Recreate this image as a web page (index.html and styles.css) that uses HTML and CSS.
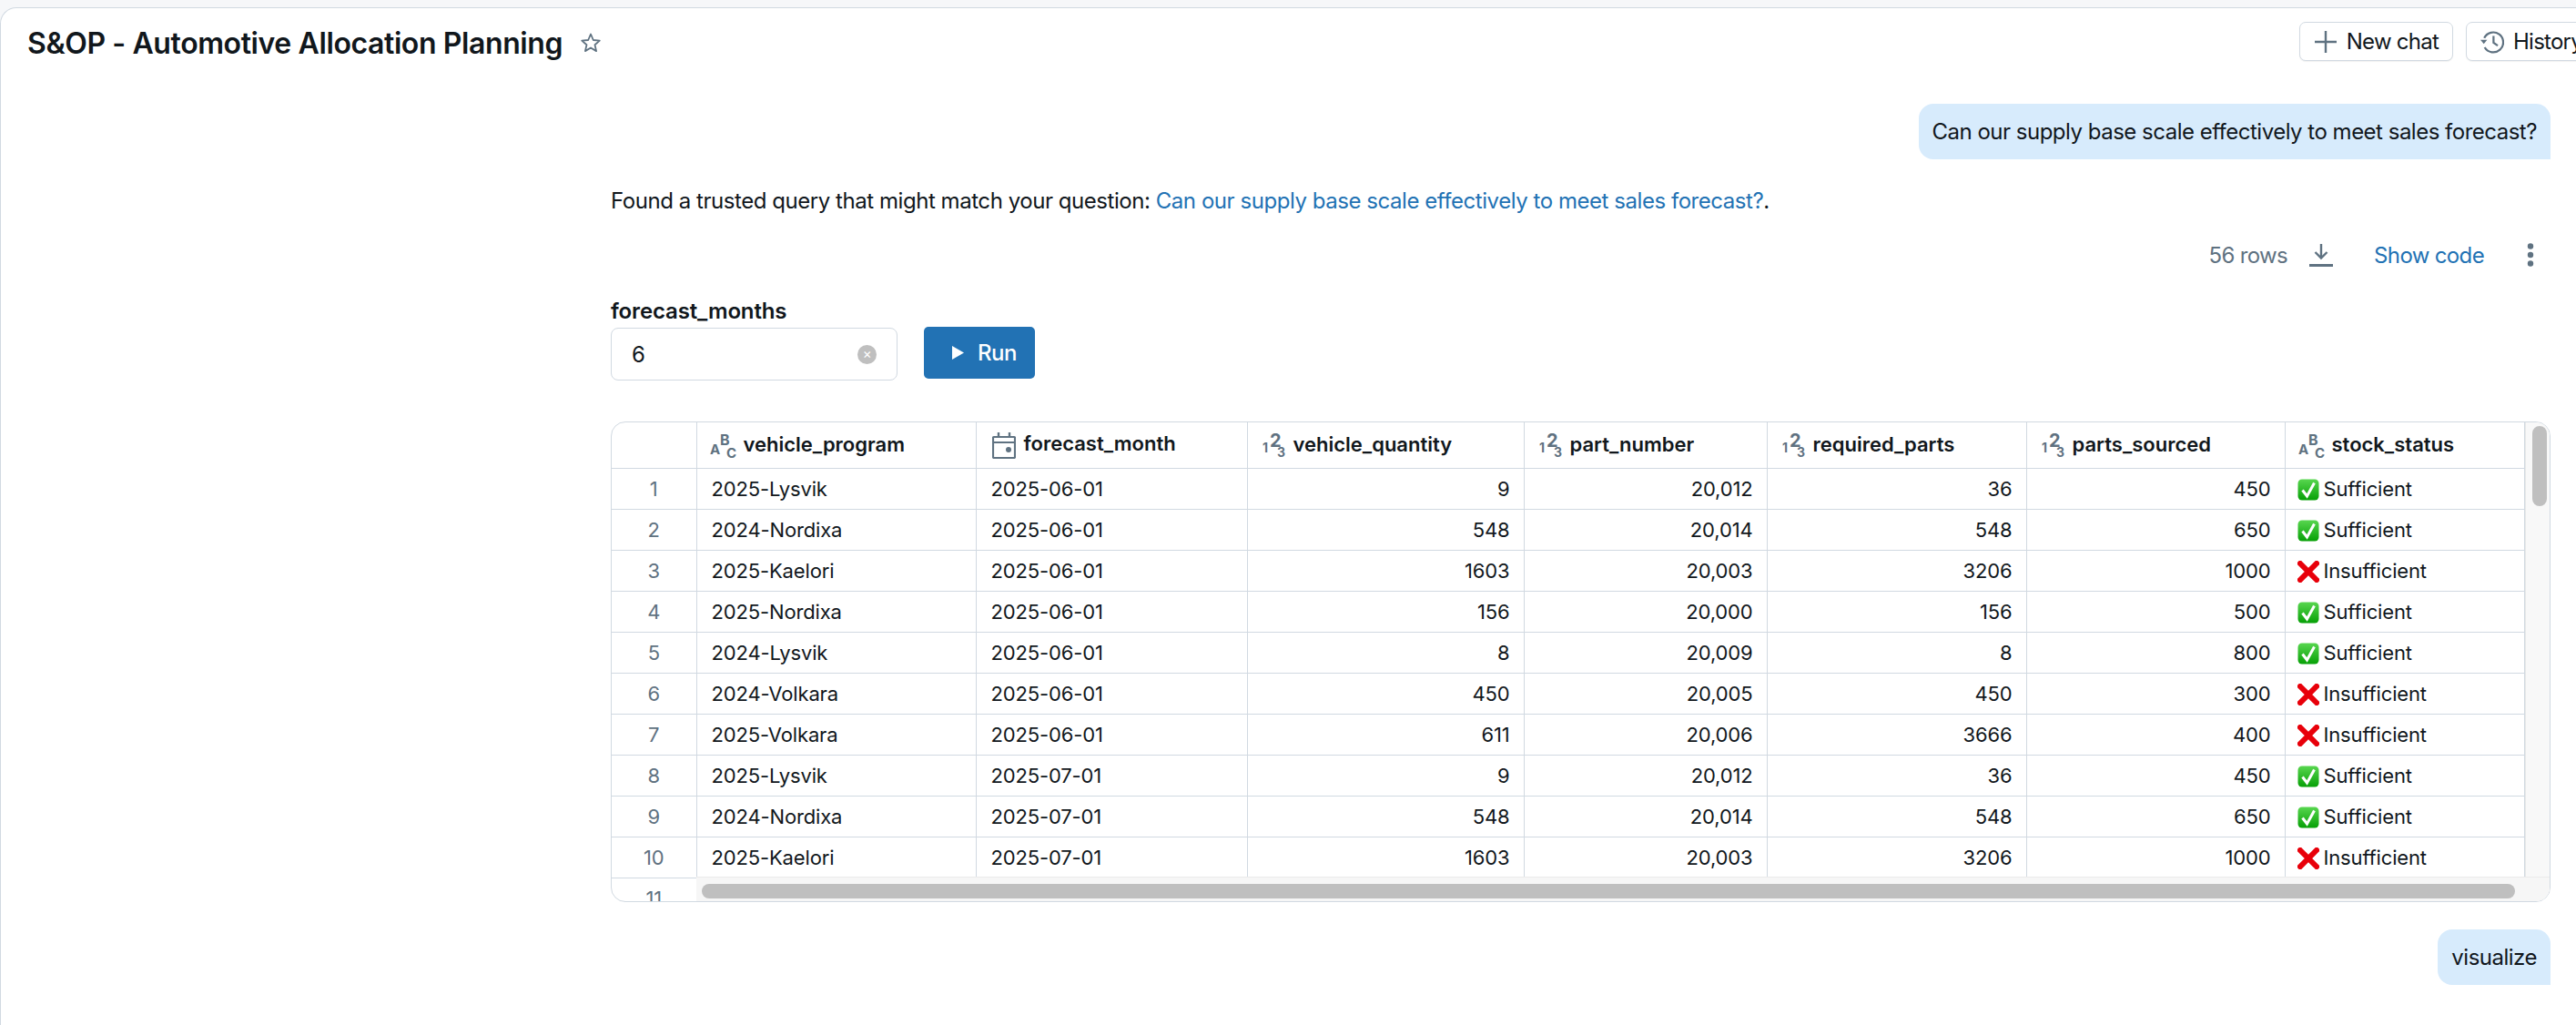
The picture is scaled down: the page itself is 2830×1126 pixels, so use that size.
FILE: index.html
```html
<!DOCTYPE html>
<html lang="en">
<head>
    <meta charset="UTF-8">
    <title>S&amp;OP - Automotive Allocation Planning</title>
    <link rel="stylesheet" href="styles.css">
</head>
<body>
    <svg class="defs" width="0" height="0">
        <defs>
            <linearGradient id="okFill" x1="0" y1="0" x2="0" y2="1">
                <stop offset="0" stop-color="#58d64f"/>
                <stop offset="1" stop-color="#06a006"/>
            </linearGradient>
        </defs>
        <symbol id="ok" viewBox="0 0 24 24">
            <rect x="0.5" y="0.5" width="23" height="23" rx="4.5" fill="url(#okFill)"/>
            <path d="M5.5 12.5l5 6.5 8-14.5" fill="none" stroke="#fff" stroke-width="3"/>
        </symbol>
        <symbol id="no" viewBox="0 0 24 24">
            <path d="M3 3l18 18M21 3L3 21" stroke="#e8000a" stroke-width="6" fill="none" stroke-linecap="square"/>
        </symbol>
    </svg>

    <div class="card">
        <header class="topbar">
            <div class="title-wrap">
                <h1>S&amp;OP - Automotive Allocation Planning</h1>
                <svg class="star" viewBox="0 0 24 24"><path d="M12 2.5l2.8 6.5 7 .6-5.3 4.6 1.6 6.9-6.1-3.6-6.1 3.6 1.6-6.9-5.3-4.6 7-.6z" fill="none" stroke="#5f7281" stroke-width="1.8" stroke-linejoin="round"/></svg>
            </div>
            <div class="actions">
                <button class="btn">
                    <svg class="btn-icon" viewBox="0 0 26 26"><path d="M13 1v24M1 13h24" stroke="#5f7281" stroke-width="2.4" fill="none"/></svg>
                    New chat
                </button>
                <button class="btn">
                    <svg class="btn-icon" viewBox="0 0 28 28"><path d="M4.5 9.5A11.8 11.8 0 1 1 5 20.5" stroke="#5f7281" stroke-width="2.4" fill="none"/><path d="M0 11.5h8l-4 5z" fill="#5f7281"/><path d="M15.5 7v8l5 3.5" stroke="#5f7281" stroke-width="2.4" fill="none"/></svg>
                    History
                </button>
            </div>
        </header>

        <div class="msg-row">
            <div class="bubble">Can our supply base scale effectively to meet sales forecast?</div>
        </div>

        <section class="answer">
            <p class="found">Found a trusted query that might match your question: <a href="#">Can our supply base scale effectively to meet sales forecast?</a>.</p>

            <div class="toolbar">
                <span class="rows">56 rows</span>
                <svg class="dl" viewBox="0 0 26 26"><path d="M13 1v15M6.5 10l6.5 6.5 6.5-6.5" stroke="#5f7281" stroke-width="2.4" fill="none"/><path d="M0 24.5h26" stroke="#5f7281" stroke-width="3"/></svg>
                <a class="show-code" href="#">Show code</a>
                <svg class="dots" viewBox="0 0 8 26"><circle cx="4" cy="3.5" r="3.2" fill="#5f7281"/><circle cx="4" cy="13" r="3.2" fill="#5f7281"/><circle cx="4" cy="22.5" r="3.2" fill="#5f7281"/></svg>
            </div>

            <div class="params">
                <div class="param">
                    <label>forecast_months</label>
                    <div class="input">
                        <span>6</span>
                        <span class="clear">×</span>
                    </div>
                </div>
                <button class="run">
                    <svg class="run-icon" viewBox="0 0 14 16"><path d="M0 0l14 8-14 8z" fill="#fff"/></svg>
                    Run
                </button>
            </div>

            <div class="grid">
                <table>
                    <colgroup>
                        <col class="c-idx"><col class="c-prog"><col class="c-month"><col class="c-qty"><col class="c-part"><col class="c-req"><col class="c-src"><col class="c-stock">
                    </colgroup>
                    <thead>
                        <tr>
                            <th></th>
                            <th><svg class="type" viewBox="0 0 28 28"><text x="0" y="23" font-size="15">A</text><text x="11" y="13" font-size="16">B</text><text x="18" y="27" font-size="15">C</text></svg>vehicle_program</th>
                            <th class="th-date"><svg class="cal" viewBox="0 0 26 30"><path d="M2 6h22a1 1 0 0 1 1 1v21a1 1 0 0 1-1 1H2a1 1 0 0 1-1-1V7a1 1 0 0 1 1-1z" fill="none" stroke="#5f7281" stroke-width="2.2"/><path d="M1 12h24" stroke="#5f7281" stroke-width="2.2"/><path d="M7 1v5M19 1v5" stroke="#5f7281" stroke-width="2.4"/><circle cx="18" cy="20" r="3" fill="#5f7281"/></svg>forecast_month</th>
                            <th class="th-num"><svg class="type" viewBox="0 0 28 28"><text x="3" y="21" font-size="14">1</text><text x="11" y="15" font-size="20">2</text><text x="19" y="26" font-size="14">3</text></svg>vehicle_quantity</th>
                            <th class="th-num"><svg class="type" viewBox="0 0 28 28"><text x="3" y="21" font-size="14">1</text><text x="11" y="15" font-size="20">2</text><text x="19" y="26" font-size="14">3</text></svg>part_number</th>
                            <th class="th-num"><svg class="type" viewBox="0 0 28 28"><text x="3" y="21" font-size="14">1</text><text x="11" y="15" font-size="20">2</text><text x="19" y="26" font-size="14">3</text></svg>required_parts</th>
                            <th class="th-num"><svg class="type" viewBox="0 0 28 28"><text x="3" y="21" font-size="14">1</text><text x="11" y="15" font-size="20">2</text><text x="19" y="26" font-size="14">3</text></svg>parts_sourced</th>
                            <th><svg class="type" viewBox="0 0 28 28"><text x="0" y="23" font-size="15">A</text><text x="11" y="13" font-size="16">B</text><text x="18" y="27" font-size="15">C</text></svg>stock_status</th>
                        </tr>
                    </thead>
                    <tbody>
                        <tr><td class="idx">1</td><td>2025-Lysvik</td><td>2025-06-01</td><td class="n">9</td><td class="n">20,012</td><td class="n">36</td><td class="n">450</td><td><svg class="mark"><use href="#ok"/></svg>Sufficient</td></tr>
                        <tr><td class="idx">2</td><td>2024-Nordixa</td><td>2025-06-01</td><td class="n">548</td><td class="n">20,014</td><td class="n">548</td><td class="n">650</td><td><svg class="mark"><use href="#ok"/></svg>Sufficient</td></tr>
                        <tr><td class="idx">3</td><td>2025-Kaelori</td><td>2025-06-01</td><td class="n">1603</td><td class="n">20,003</td><td class="n">3206</td><td class="n">1000</td><td><svg class="mark"><use href="#no"/></svg>Insufficient</td></tr>
                        <tr><td class="idx">4</td><td>2025-Nordixa</td><td>2025-06-01</td><td class="n">156</td><td class="n">20,000</td><td class="n">156</td><td class="n">500</td><td><svg class="mark"><use href="#ok"/></svg>Sufficient</td></tr>
                        <tr><td class="idx">5</td><td>2024-Lysvik</td><td>2025-06-01</td><td class="n">8</td><td class="n">20,009</td><td class="n">8</td><td class="n">800</td><td><svg class="mark"><use href="#ok"/></svg>Sufficient</td></tr>
                        <tr><td class="idx">6</td><td>2024-Volkara</td><td>2025-06-01</td><td class="n">450</td><td class="n">20,005</td><td class="n">450</td><td class="n">300</td><td><svg class="mark"><use href="#no"/></svg>Insufficient</td></tr>
                        <tr><td class="idx">7</td><td>2025-Volkara</td><td>2025-06-01</td><td class="n">611</td><td class="n">20,006</td><td class="n">3666</td><td class="n">400</td><td><svg class="mark"><use href="#no"/></svg>Insufficient</td></tr>
                        <tr><td class="idx">8</td><td>2025-Lysvik</td><td>2025-07-01</td><td class="n">9</td><td class="n">20,012</td><td class="n">36</td><td class="n">450</td><td><svg class="mark"><use href="#ok"/></svg>Sufficient</td></tr>
                        <tr><td class="idx">9</td><td>2024-Nordixa</td><td>2025-07-01</td><td class="n">548</td><td class="n">20,014</td><td class="n">548</td><td class="n">650</td><td><svg class="mark"><use href="#ok"/></svg>Sufficient</td></tr>
                        <tr><td class="idx">10</td><td>2025-Kaelori</td><td>2025-07-01</td><td class="n">1603</td><td class="n">20,003</td><td class="n">3206</td><td class="n">1000</td><td><svg class="mark"><use href="#no"/></svg>Insufficient</td></tr>
                        <tr><td class="idx">11</td><td></td><td></td><td></td><td></td><td></td><td></td><td></td></tr>
                    </tbody>
                </table>
                <!-- scrollbars sit on top of the table -->
                <div class="track-v"><div class="thumb-v"></div></div>
                <div class="track-h"><div class="thumb-h"></div></div>
            </div>
        </section>

        <div class="msg-row msg-second">
            <div class="bubble">visualize</div>
        </div>
    </div>
</body>
</html>
```

FILE: styles.css
```css
* {
    box-sizing: border-box;
}
html, body {
    margin: 0;
    height: 100%;
    overflow: hidden;
}
body {
    background-color: #f6f7f9;
    padding-top: 8px;
    font-family: Inter, "Liberation Sans", sans-serif;
    font-size: 24px;
    letter-spacing: -0.5px;
    color: #11171c;
}
.defs {
    position: absolute;
}
.card {
    height: 1118px;
    background-color: #fff;
    border-top: 1px solid #d1d9e1;
    border-left: 1px solid #d1d9e1;
    border-top-left-radius: 18px;
    padding: 15px 28px 0 0;
    overflow: hidden;
}

/* top bar */
.topbar {
    display: flex;
    align-items: center;
    justify-content: space-between;
    height: 43px;
    padding-left: 29px;
    margin-right: -51px;
}
.title-wrap {
    display: flex;
    align-items: center;
    gap: 19px;
    margin-top: 5px;
}
h1 {
    margin: 0;
    font-size: 32px;
    font-weight: 600;
    letter-spacing: -0.4px;
    line-height: 48px;
}
.star {
    width: 24px;
    height: 24px;
    margin-top: -2px;
}
.actions {
    display: flex;
    gap: 14px;
}
.btn {
    display: flex;
    align-items: center;
    gap: 10px;
    height: 43px;
    padding: 0 15px;
    background-color: #fff;
    border: 1px solid #d1d9e1;
    border-radius: 7px;
    box-shadow: 0 1px 1px rgba(0, 0, 0, 0.06);
    font: inherit;
    letter-spacing: -0.75px;
    color: #11171c;
}
.btn-icon {
    width: 26px;
    height: 26px;
}

/* chat */
.msg-row {
    display: flex;
    justify-content: flex-end;
    margin-top: 47px;
}
.msg-second {
    margin-top: 30px;
}
.bubble {
    height: 61px;
    padding: 0 15px;
    background-color: #d7ebfc;
    border-radius: 16px 16px 0 16px;
    line-height: 61px;
}
.answer {
    margin-left: 670px;
}
.found {
    margin: 30px 0 0;
    letter-spacing: -0.45px;
    line-height: 32px;
}
a {
    color: #2272b4;
    text-decoration: none;
}
.toolbar {
    display: flex;
    align-items: center;
    justify-content: flex-end;
    height: 32px;
    margin-top: 27px;
    padding-right: 18px;
    letter-spacing: -0.65px;
}
.rows {
    color: #5f7281;
}
.dl {
    width: 26px;
    height: 26px;
    margin-left: 24px;
}
.show-code {
    margin-left: 45px;
}
.dots {
    width: 8px;
    height: 26px;
    margin-left: 47px;
}

/* parameter row */
.params {
    display: flex;
    align-items: flex-end;
    gap: 29px;
    margin-top: 30px;
}
.param label {
    display: block;
    margin-bottom: 2px;
    font-weight: 600;
    letter-spacing: -0.15px;
    line-height: 32px;
}
.input {
    display: flex;
    align-items: center;
    justify-content: space-between;
    width: 315px;
    height: 58px;
    padding: 0 22px;
    border: 1px solid #d1d9e1;
    border-radius: 8px;
}
.clear {
    width: 21px;
    height: 21px;
    border-radius: 50%;
    background-color: #bfbfbf;
    color: #fff;
    font-size: 15px;
    line-height: 20px;
    text-align: center;
}
.run {
    display: flex;
    align-items: center;
    gap: 15px;
    width: 122px;
    height: 57px;
    margin-bottom: 2px;
    padding: 0 0 0 31px;
    background-color: #2272b4;
    border: none;
    border-radius: 5px;
    font: inherit;
    font-weight: 500;
    letter-spacing: inherit;
    color: #fff;
}
.run-icon {
    width: 13px;
    height: 15px;
}

/* results table */
.grid {
    position: relative;
    height: 528px;
    margin-top: 45px;
    border: 1px solid #d1d9e1;
    border-radius: 16px;
    overflow: hidden;
    background-color: #fff;
}
table {
    width: 2101px;
    table-layout: fixed;
    border-collapse: collapse;
    font-size: 22px;
    letter-spacing: -0.15px;
}
.c-idx { width: 93px; }
.c-prog { width: 307px; }
.c-month { width: 298px; }
.c-qty { width: 304px; }
.c-part { width: 267px; }
.c-req { width: 285px; }
.c-src { width: 284px; }
.c-stock { width: 263px; }
th, td {
    height: 45px;
    padding: 0 15px 0 16px;
    border-right: 1px solid #d1d9e1;
    border-bottom: 1px solid #d1d9e1;
    white-space: nowrap;
    overflow: hidden;
}
th {
    height: 50px;
    padding: 1px 15px 0 14px;
    text-align: left;
    font-weight: 600;
    letter-spacing: 0;
}
.th-num {
    padding-left: 13px;
}
td {
    font-weight: 400;
}
.n {
    text-align: right;
}
.idx {
    padding: 0;
    text-align: center;
    color: #5f7281;
}
.type {
    width: 28px;
    height: 28px;
    margin-right: 9px;
    vertical-align: middle;
    overflow: visible;
}
.type text {
    font-family: Inter, sans-serif;
    font-weight: 700;
    letter-spacing: 0;
    fill: #5f7281;
}
.cal {
    width: 26px;
    height: 30px;
    margin: 0 9px 0 3px;
    vertical-align: middle;
}
.mark {
    width: 24px;
    height: 24px;
    margin: 0 5px 0 -3px;
    vertical-align: -5px;
}
.track-v {
    position: absolute;
    top: 0;
    right: 0;
    bottom: 0;
    width: 27px;
    background-color: #f8f8f8;
    border-left: 1px solid #e8e8e8;
}
.thumb-v {
    width: 16px;
    height: 88px;
    margin: 4px 0 0 7px;
    background-color: #bfbfbf;
    border-radius: 8px;
}
.track-h {
    position: absolute;
    left: 93px;
    right: 0;
    bottom: 0;
    height: 27px;
    padding: 7px 0 0 6px;
    background-color: #f6f6f6;
    border-top: 1px solid #ebebeb;
}
.thumb-h {
    width: 1992px;
    height: 16px;
    background-color: #bfbfbf;
    border-radius: 8px;
}
```
